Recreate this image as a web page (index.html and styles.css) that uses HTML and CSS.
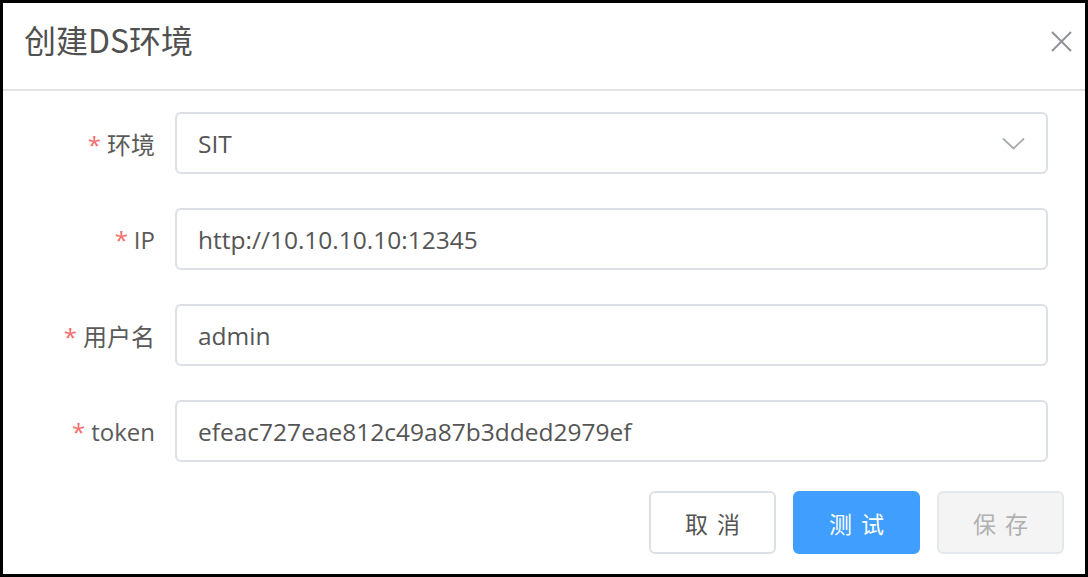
FILE: index.html
```html
<!DOCTYPE html>
<html lang="zh-CN">
<head>
<meta charset="utf-8">
<title>创建DS环境</title>
<link rel="stylesheet" href="styles.css">
</head>
<body>
<div class="dialog">
  <header class="dlg-header">
    <span class="dlg-title">创建DS环境</span>
    <button class="dlg-close" aria-label="关闭">
      <svg width="21" height="21" viewBox="0 0 21 21"><path d="M1 1L20 20M20 1L1 20" stroke="#909399" stroke-width="2" fill="none"/></svg>
    </button>
  </header>
  <div class="dlg-body">
    <div class="form-row">
      <label class="form-label"><span class="req">*</span>环境</label>
      <div class="form-input select">
        <span class="value">SIT</span>
        <svg class="chev" width="23" height="13" viewBox="0 0 23 13"><path d="M1 1.5L11.5 11.5L22 1.5" stroke="#a8abb2" stroke-width="1.8" fill="none"/></svg>
      </div>
    </div>
    <div class="form-row">
      <label class="form-label"><span class="req">*</span>IP</label>
      <div class="form-input"><span class="value">http://10.10.10.10:12345</span></div>
    </div>
    <div class="form-row">
      <label class="form-label"><span class="req">*</span>用户名</label>
      <div class="form-input"><span class="value">admin</span></div>
    </div>
    <div class="form-row">
      <label class="form-label"><span class="req">*</span>token</label>
      <div class="form-input"><span class="value">efeac727eae812c49a87b3dded2979ef</span></div>
    </div>
  </div>
  <footer class="dlg-footer">
    <button class="btn">取消</button>
    <button class="btn primary">测试</button>
    <button class="btn disabled">保存</button>
  </footer>
</div>
</body>
</html>
```

FILE: styles.css
```css
html, body {
  margin: 0;
  padding: 0;
  background: #fff;
}
body {
  font-family: "Open Sans", "Noto Sans CJK SC", sans-serif;
}
.dialog {
  box-sizing: border-box;
  width: 1088px;
  height: 577px;
  border: 3px solid #000;
  background: #fff;
  display: flex;
  flex-direction: column;
}
.dlg-header {
  height: 86px;
  border-bottom: 2px solid #e4e4e4;
  display: flex;
  align-items: center;
  justify-content: space-between;
  padding: 0 13px 0 21px;
}
.dlg-title {
  font-family: "Noto Sans CJK SC", sans-serif;
  font-size: 32px;
  color: #505050;
  margin-top: -14px;
}
.dlg-close {
  border: 0;
  background: none;
  padding: 0;
  width: 21px;
  height: 21px;
  display: flex;
  margin-top: -9px;
}
.dlg-body {
  padding: 21px 37px 0 0;
  display: flex;
  flex-direction: column;
  gap: 34px;
}
.form-row {
  display: flex;
  align-items: center;
  height: 62px;
}
.form-label {
  width: 152px;
  padding-right: 20px;
  box-sizing: content-box;
  text-align: right;
  font-size: 24px;
  color: #5a5a5a;
  font-family: "Open Sans", "Noto Sans CJK SC", sans-serif;
}
.req {
  color: #f56c6c;
  margin-right: 6px;
}
.form-input {
  flex: 1;
  box-sizing: border-box;
  height: 62px;
  border: 2px solid #dcdfe6;
  border-radius: 6px;
  display: flex;
  align-items: center;
  padding: 0 21px;
  font-size: 24.5px;
  color: #555;
}
.select {
  justify-content: space-between;
  padding-right: 21px;
}
.chev {
  display: block;
}
.dlg-footer {
  margin-top: auto;
  padding: 0 21px 20px 0;
  display: flex;
  justify-content: flex-end;
  gap: 17px;
}
.btn {
  box-sizing: border-box;
  width: 127px;
  height: 63px;
  border: 2px solid #dcdfe6;
  border-radius: 6px;
  background: #fff;
  color: #555;
  font-family: "Noto Sans CJK SC", sans-serif;
  font-size: 23px;
  letter-spacing: 9px;
  text-indent: 9px;
  padding: 0;
}
.btn.primary {
  background: #409eff;
  border-color: #409eff;
  color: #fff;
}
.btn.disabled {
  background: #f4f4f5;
  border-color: #e4e7ed;
  color: #b0b0b0;
}
```
